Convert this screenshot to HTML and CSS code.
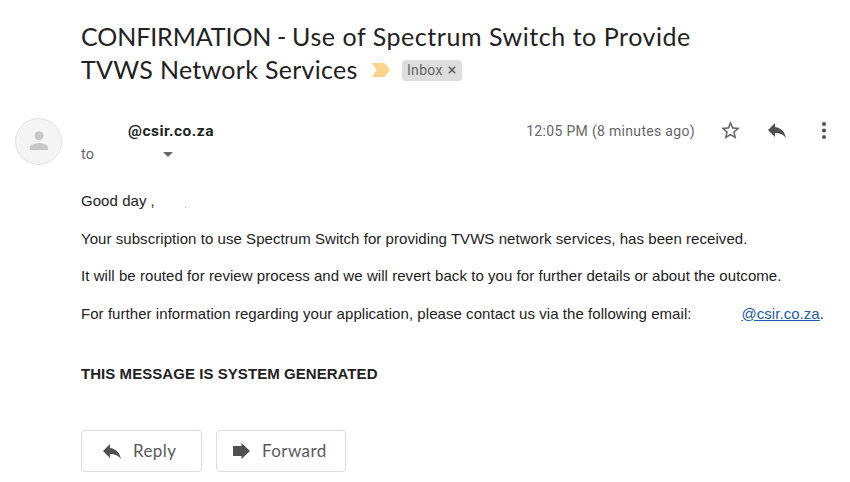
FILE: index.html
```html
<!doctype html>
<html lang="en">
<head>
  <meta charset="utf-8" />
  <meta name="viewport" content="width=device-width,initial-scale=1" />
  <title>CONFIRMATION - Use of Spectrum Switch</title>
  <link rel="stylesheet" href="styles.css">
</head>
<body>
  <main class="mail">
    <!-- Subject -->
    <h1 class="subject">
      <span class="subject-first"><span class="caps">CONFIRMATION - </span>Use of Spectrum Switch to Provide</span>
      <span class="subject-row">
        <span class="subject-second">TVWS Network Services</span>
        <svg class="important" viewBox="0 0 18 14"><path d="M0 0h12.5L18 7l-5.500 7H0l4.500-7z"/></svg>
        <span class="label">Inbox
          <svg viewBox="0 0 8 8"><path d="M.8.8l6.400 6.400M7.200.8L.8 7.200"/></svg>
        </span>
      </span>
    </h1>

    <!-- Sender -->
    <header class="sender">
      <div class="avatar">
        <svg viewBox="0 0 18 19"><circle cx="9" cy="4.700" r="4.500"/><path d="M0 19v-2.500c0-3 6-4.600 9-4.600s9 1.600 9 4.600V19z"/></svg>
      </div>
      <div class="who">
        <div class="from">@csir.co.za</div>
        <div class="to">to <span class="caret"></span></div>
      </div>
      <div class="actions">
        <span class="time">12:05 PM (8 minutes ago)</span>
        <svg class="star" viewBox="2 2 20 19"><path d="M22 9.240l-7.190-.62L12 2 9.190 8.630 2 9.240l5.460 4.730L5.820 21 12 17.270 18.180 21l-1.630-7.030L22 9.240zM12 15.400l-3.760 2.270 1-4.280-3.320-2.880 4.380-.38L12 6.100l1.710 4.040 4.380.38-3.320 2.880 1 4.280L12 15.400z"/></svg>
        <svg class="reply-icon" viewBox="3 5 18 14"><path d="M10 9V5l-7 7 7 7v-4.100c5 0 8.500 1.600 11 5.100-1-5-4-10-11-11z"/></svg>
        <svg class="more" viewBox="0 0 4 17"><circle cx="2" cy="2" r="2"/><circle cx="2" cy="8.500" r="2"/><circle cx="2" cy="15" r="2"/></svg>
      </div>
    </header>

    <!-- Message -->
    <section class="message">
      <p class="line-greeting">Good day <span class="comma">,</span><span class="dot"></span></p>
      <p class="line-received">Your subscription to use Spectrum Switch for providing TVWS network services, has been received.</p>
      <p class="line-review">It will be routed for review process and we will revert back to you for further details or about the outcome.</p>
      <p class="line-contact"><span>For further information regarding your application, please contact us via the following email:</span><span><a href="#">@csir.co.za</a>.</span></p>
      <p class="generated">THIS MESSAGE IS SYSTEM GENERATED</p>
    </section>

    <footer class="buttons">
      <button class="reply">
        <svg class="reply-icon" viewBox="3 5 18 14"><path d="M10 9V5l-7 7 7 7v-4.100c5 0 8.500 1.600 11 5.100-1-5-4-10-11-11z"/></svg>
        <span>Reply</span>
      </button>
      <button class="forward">
        <svg class="forward-icon" viewBox="0 0 17 16"><path d="M0 3h8.500V0L17 8l-8.500 8v-3H0z"/></svg>
        <span>Forward</span>
      </button>
    </footer>
  </main>
</body>
</html>
```

FILE: styles.css
```css
:root {
  --ink: #222;
  --muted: #666;
  --icon: #505050;
}
* { box-sizing:border-box; }
body {
  margin:0; background:#fff; color:var(--ink);
  font-family:"Liberation Sans", Arial, sans-serif;
}
svg { display:block; flex:none; overflow:visible; }
.mail { width:850px; height:482px; padding:20px 0 0 81px; overflow:hidden; }

/* Subject */
.subject {
  margin:0; font:400 25px/33px Lato, sans-serif; white-space:nowrap;
}
.subject-first { display:block; letter-spacing:.54px; }
.caps { letter-spacing:-.1px; word-spacing:-.5px; }
.subject-row { display:flex; align-items:center; height:33px; }
.subject-second { width:276px; letter-spacing:.3px; }
.important { width:18px; height:14px; margin-left:15px; fill:#fbd38a; }
.label {
  display:flex; align-items:center; justify-content:space-between;
  width:60px; height:21px; margin:1px 0 0 12px; padding:0 6px 0 5px;
  border-radius:4px; background:#ddd; color:var(--muted);
  font:14px/21px Roboto, sans-serif; letter-spacing:.3px;
}
.label svg { width:8px; height:8px; stroke:#555; stroke-width:1.4; }

/* Sender */
.sender { display:flex; height:52px; margin:31px 0 0 -66px; }
.avatar {
  display:flex; align-items:center; justify-content:center;
  width:47px; height:47px; margin-top:1px;
  border:1px solid #e2e2e2; border-radius:50%; background:#f4f4f4;
}
.avatar svg { width:18px; height:19px; margin-top:-3px; fill:#c8c8c8; }
.who { width:200px; margin-left:19px; padding-top:1px; }
.from { padding-left:47px; font:700 15.500px/26px Roboto, sans-serif; letter-spacing:.5px; }
.to {
  display:flex; align-items:center; height:21px; color:var(--muted);
  font:14.500px/21px Roboto, sans-serif; letter-spacing:.2px;
}
.caret {
  margin-left:69px; border:5px solid transparent;
  border-top-color:#666; border-bottom:0;
}
.actions { display:flex; align-items:center; height:26px; margin-left:auto; padding-right:24px; }
.time { padding-top:2px; color:var(--muted); font:14px/26px Roboto, sans-serif; letter-spacing:.32px; }
.star { width:19px; height:18px; margin-left:26px; fill:#666; }
.reply-icon { width:18px; height:14px; fill:var(--icon); }
.actions .reply-icon { margin-left:28px; }
.more { width:4px; height:17px; margin-left:36px; fill:var(--icon); }

/* Message */
.message {
  padding-top:22px; font-size:15px; line-height:20px;
  letter-spacing:.055px; white-space:nowrap;
}
.message p { margin:0 0 17.500px; }
.message .line-greeting { display:flex; }
.comma { margin-left:4px; }
.dot { width:1px; height:1px; margin:16px 0 0 30px; background:#aaa; }
.line-contact { display:flex; justify-content:space-between; padding-right:26px; }
.message a { color:#1a5cad; }
.message .generated { margin-top:40px; font-weight:700; }

/* Buttons */
.buttons { display:flex; gap:14px; margin-top:46px; }
.buttons button {
  display:flex; align-items:center; height:42px; padding:0 0 0 21px;
  border:1px solid #dadce0; border-radius:4px; background:#fff;
  color:#5a5a5a; font:17px/40px Lato, sans-serif; letter-spacing:.4px;
}
.reply { width:121px; }
.forward { width:130px; }
.buttons .forward { padding-left:16px; }
.buttons span { margin-left:12px; }
.forward-icon { width:17px; height:16px; fill:var(--icon); }
```
